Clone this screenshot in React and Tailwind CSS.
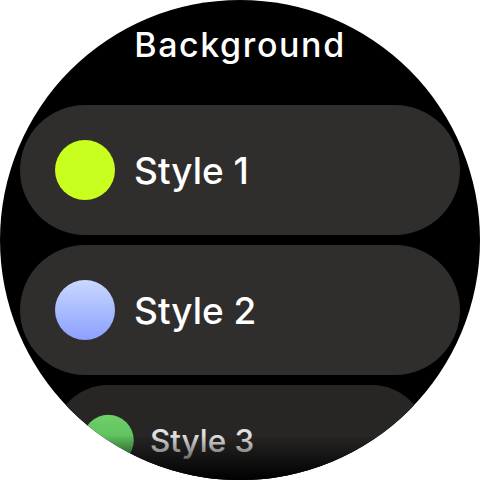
import React from 'react';

const styles = [
  { label: 'Style 1', dot: 'bg-[#c9ff1f]' },
  { label: 'Style 2', dot: 'bg-gradient-to-b from-[#c9d8ff] to-[#8c9fff]' },
  { label: 'Style 3', dot: 'bg-gradient-to-b from-[#6fd06a] to-[#4fb24f]' },
];

const Chip = ({ label, dot, faded }) => (
  <div
    className={
      'flex items-center w-[440px] h-[130px] shrink-0 rounded-full pl-[35px] gap-[19px] ' +
      (faded ? 'scale-[0.85] origin-top bg-[#272625] text-[#e0e0e0]' : 'bg-[#302e2c] text-white')
    }
  >
    <div className={'w-[60px] h-[60px] rounded-full shrink-0 ' + dot}></div>
    <span className="text-[37px] leading-none font-medium">{label}</span>
  </div>
);

export default function App() {
  return (
    <div
      className="relative w-[480px] h-[480px] bg-black overflow-hidden rounded-full"
      style={{ fontFamily: 'Inter, "Noto Sans", sans-serif' }}
    >
      <div className="flex flex-col items-center gap-[10px]">
        <h1 className="h-[95px] pt-[25px] text-[34px] leading-[40px] text-white font-medium tracking-[1.6px]">Background</h1>
        {styles.map((s, i) => (
          <Chip key={s.label} {...s} faded={i === 2} />
        ))}
      </div>
      {/* bottom fade */}
      <div className="absolute left-0 right-0 bottom-0 h-[45px] bg-gradient-to-b from-transparent to-black"></div>
    </div>
  );
}
